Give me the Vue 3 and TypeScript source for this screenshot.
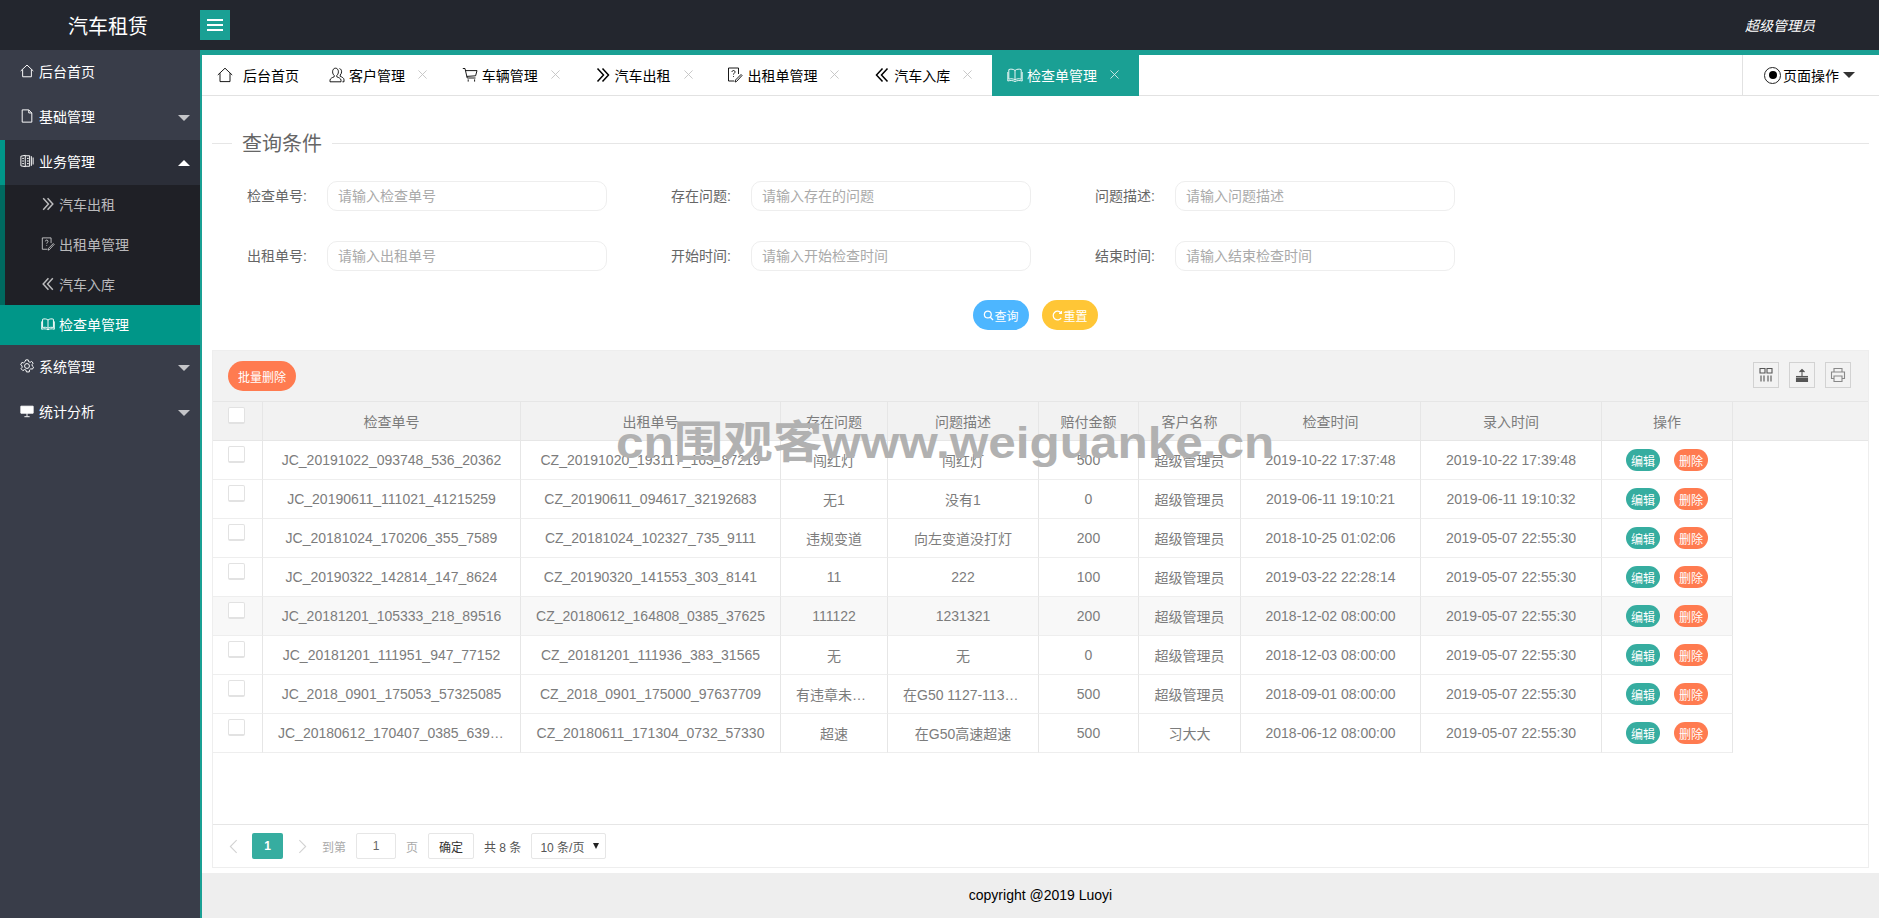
<script setup lang="ts">
import { ref } from 'vue';

interface Tab {
  title: string;
  icon: string;
  closable: boolean;
  active?: boolean;
}

interface NavChild {
  title: string;
  icon: string;
  active?: boolean;
}

interface NavItem {
  title: string;
  icon: string;
  arrow?: 'up' | 'down';
  open?: boolean;
  children?: NavChild[];
}

interface CheckRow {
  checkId: string;
  rentId: string;
  problem: string;
  description: string;
  money: string;
  customer: string;
  checkTime: string;
  createTime: string;
}

// stroke paths, all drawn in a 16x16 box
const icons: Record<string, string[]> = {
  home: ['M.8 8 8 1.2 15.2 8', 'M3 6.2V14.6H13V6.2'],
  file: ['M2.5 1H10L13.5 4.5V15H2.5Z', 'M10 1V4.5H13.5'],
  business: ['M1 2.5 6 1.5V14.5L1 13.5Z', 'M6 2H11V14H6', 'M8 5H10M8 8H10M8 11H10', 'M13 2.5V13.5M15 4V12', 'M2.5 5H4.5M2.5 8H4.5M2.5 11H4.5'],
  gear: ['M6.6 1H9.4L9.8 3 11.6 3.8 13.3 2.7 15 4.8 13.8 6.3 14 8 15.5 9.3 14.2 11.6 12.3 11.2 10.9 12.5 10.6 14.8H7.4L6.9 12.8 5.2 12.1 3.3 13.3 1.2 11.1 2.5 9.4 2.2 7.6.8 6.6 2.1 4 4.2 4.4 5.6 3.2Z', 'M8 5.2A2.8 2.8 0 1 0 8 10.8 2.8 2.8 0 1 0 8 5.2Z'],
  user: ['M6.5 1.2C4.6 1.2 3.6 2.8 3.6 4.8 3.6 6.4 4.3 7.7 5.2 8.4V9.8C3.2 10.6 1 11.5 1 13.2V14.8H12V13.2C12 11.5 9.8 10.6 7.8 9.8V8.4C8.7 7.7 9.4 6.4 9.4 4.8 9.4 2.8 8.4 1.2 6.5 1.2Z', 'M10.5 1.5C12 2 12.6 3.4 12.6 4.8 12.6 6.2 12 7.3 11.2 8V9.3C13 10 15 11 15 12.8V14.8H13.4'],
  cart: ['M.8 1.5H3L5.2 11H13.5', 'M3.6 3.6H15L13.6 8.8 4.8 9.4', 'M6.2 12.4V14.6M12.6 12.4V14.6'],
  right: ['M2.5 1.5 8.5 8 2.5 14.5', 'M7.5 1.5 13.5 8 7.5 14.5'],
  left: ['M8.5 1.5 2.5 8 8.5 14.5', 'M13.5 1.5 7.5 8 13.5 14.5'],
  order: ['M11.5 7V1H1.5V14H7', 'M5 5C5 3 8 3 8 5 8 6.2 6.5 6.2 6.5 7.6', 'M6.5 9.2V10', 'M15 8.5 9.5 14.5 8 15 8.5 13 14 7.5Z'],
  book: ['M8 3.5C6.5 2 3.5 1.8 1.8 2.6V12.2C3.5 11.4 6.5 11.6 8 13 9.5 11.6 12.5 11.4 14.2 12.2V2.6C12.5 1.8 9.5 2 8 3.5Z', 'M8 3.5V13', 'M.8 5V14C3.5 13.2 6 13.4 8 14.6 10 13.4 12.5 13.2 15.2 14V5'],
  board: ['M1 2.5H15V10.5H1Z', 'M8 10.5V14M5 14.5H11'],
  search: ['M7 1.5A5 5 0 1 0 7 11.5 5 5 0 1 0 7 1.5Z', 'M10.6 10.6 14.6 14.6'],
  refresh: ['M13 4.2A6.3 6.3 0 1 0 13.4 11.4', 'M13.6 1.4V4.8H10.2'],
  cols: ['M2 1.5H7V6H2ZM9 1.5H14V6H9Z', 'M3 8.5V14.5M6 8.5V14.5M10 8.5V14.5M13 8.5V14.5'],
  exports: ['M8 9.5V2.5M5.5 5 8 2.5 10.5 5', 'M2 9.5H14', 'M2.5 11H13.5V14.5H2.5Z'],
  print: ['M4 5V1.5H12V5', 'M4 11.5H1.5V5H14.5V11.5H12', 'M4 9H12V14.5H4Z'],
};

const tabs = ref<Tab[]>([
  { title: '后台首页', icon: 'home', closable: false },
  { title: '客户管理', icon: 'user', closable: true },
  { title: '车辆管理', icon: 'cart', closable: true },
  { title: '汽车出租', icon: 'right', closable: true },
  { title: '出租单管理', icon: 'order', closable: true },
  { title: '汽车入库', icon: 'left', closable: true },
  { title: '检查单管理', icon: 'book', closable: true, active: true },
]);

const navItems = ref<NavItem[]>([
  { title: '后台首页', icon: 'home' },
  { title: '基础管理', icon: 'file', arrow: 'down' },
  {
    title: '业务管理',
    icon: 'business',
    arrow: 'up',
    open: true,
    children: [
      { title: '汽车出租', icon: 'right' },
      { title: '出租单管理', icon: 'order' },
      { title: '汽车入库', icon: 'left' },
      { title: '检查单管理', icon: 'book', active: true },
    ],
  },
  { title: '系统管理', icon: 'gear', arrow: 'down' },
  { title: '统计分析', icon: 'board', arrow: 'down' },
]);

const fields = [
  { label: '检查单号:', placeholder: '请输入检查单号' },
  { label: '存在问题:', placeholder: '请输入存在的问题' },
  { label: '问题描述:', placeholder: '请输入问题描述' },
  { label: '出租单号:', placeholder: '请输入出租单号' },
  { label: '开始时间:', placeholder: '请输入开始检查时间' },
  { label: '结束时间:', placeholder: '请输入结束检查时间' },
];

const columns = [
  { title: '检查单号', width: 258 },
  { title: '出租单号', width: 260 },
  { title: '存在问题', width: 107 },
  { title: '问题描述', width: 151 },
  { title: '赔付金额', width: 100 },
  { title: '客户名称', width: 102 },
  { title: '检查时间', width: 180 },
  { title: '录入时间', width: 181 },
  { title: '操作', width: 131 },
];

const rows = ref<CheckRow[]>([
  { checkId: 'JC_20191022_093748_536_20362', rentId: 'CZ_20191020_193117_163_87219', problem: '闯红灯', description: '闯红灯', money: '500', customer: '超级管理员', checkTime: '2019-10-22 17:37:48', createTime: '2019-10-22 17:39:48' },
  { checkId: 'JC_20190611_111021_41215259', rentId: 'CZ_20190611_094617_32192683', problem: '无1', description: '没有1', money: '0', customer: '超级管理员', checkTime: '2019-06-11 19:10:21', createTime: '2019-06-11 19:10:32' },
  { checkId: 'JC_20181024_170206_355_7589', rentId: 'CZ_20181024_102327_735_9111', problem: '违规变道', description: '向左变道没打灯', money: '200', customer: '超级管理员', checkTime: '2018-10-25 01:02:06', createTime: '2019-05-07 22:55:30' },
  { checkId: 'JC_20190322_142814_147_8624', rentId: 'CZ_20190320_141553_303_8141', problem: '11', description: '222', money: '100', customer: '超级管理员', checkTime: '2019-03-22 22:28:14', createTime: '2019-05-07 22:55:30' },
  { checkId: 'JC_20181201_105333_218_89516', rentId: 'CZ_20180612_164808_0385_37625', problem: '111122', description: '1231321', money: '200', customer: '超级管理员', checkTime: '2018-12-02 08:00:00', createTime: '2019-05-07 22:55:30' },
  { checkId: 'JC_20181201_111951_947_77152', rentId: 'CZ_20181201_111936_383_31565', problem: '无', description: '无', money: '0', customer: '超级管理员', checkTime: '2018-12-03 08:00:00', createTime: '2019-05-07 22:55:30' },
  { checkId: 'JC_2018_0901_175053_57325085', rentId: 'CZ_2018_0901_175000_97637709', problem: '有违章未处理', description: '在G50 1127-1138路段', money: '500', customer: '超级管理员', checkTime: '2018-09-01 08:00:00', createTime: '2019-05-07 22:55:30' },
  { checkId: 'JC_20180612_170407_0385_63921', rentId: 'CZ_20180611_171304_0732_57330', problem: '超速', description: '在G50高速超速', money: '500', customer: '习大大', checkTime: '2018-06-12 08:00:00', createTime: '2019-05-07 22:55:30' },
]);

const hoverRow = 4;
</script>

<template>
  <div class="page">
    <header class="top-bar">
      <div class="logo">汽车租赁</div>
      <button class="toggle" type="button">
        <span></span><span></span><span></span>
      </button>
      <div class="user-name">超级管理员</div>
    </header>

    <div class="body-row">
      <aside class="side-nav">
        <div v-for="item in navItems" :key="item.title" :class="{ 'nav-open': item.open }">
          <div class="nav-item">
            <svg class="ico" :class="'i-' + item.icon" viewBox="0 0 16 16"><path v-for="d in icons[item.icon]" :key="d" :d="d" /></svg>
            <span>{{ item.title }}</span>
            <i v-if="item.arrow" class="arrow" :class="item.arrow"></i>
          </div>
          <div v-if="item.children" class="nav-children">
            <div
              v-for="child in item.children"
              :key="child.title"
              class="nav-child"
              :class="{ active: child.active }"
            >
              <svg class="ico" :class="'i-' + child.icon" viewBox="0 0 16 16"><path v-for="d in icons[child.icon]" :key="d" :d="d" /></svg>
              <span>{{ child.title }}</span>
            </div>
          </div>
        </div>
      </aside>

      <main class="main">
        <div class="tab-bar">
          <ul class="tabs">
            <li v-for="tab in tabs" :key="tab.title" class="tab" :class="{ active: tab.active, fixed: !tab.closable }">
              <svg class="ico" :class="'i-' + tab.icon" viewBox="0 0 16 16"><path v-for="d in icons[tab.icon]" :key="d" :d="d" /></svg>
              <span>{{ tab.title }}</span>
              <svg v-if="tab.closable" class="close" viewBox="0 0 16 16"><path d="M3 3 13 13M13 3 3 13" /></svg>
            </li>
          </ul>
          <div class="page-ops">
            <span class="dot-ring"><i></i></span>
            <span>页面操作</span>
            <i class="ops-arrow"></i>
          </div>
        </div>

        <div class="content">
          <div class="field-title"><span>查询条件</span></div>

          <form class="search-form" @submit.prevent>
            <div v-for="f in fields" :key="f.label" class="form-field">
              <label>{{ f.label }}</label>
              <input type="text" :placeholder="f.placeholder" />
            </div>
          </form>

          <div class="search-actions">
            <button class="pill blue" type="button">
              <svg class="ico" viewBox="0 0 16 16"><path v-for="d in icons.search" :key="d" :d="d" /></svg>查询
            </button>
            <button class="pill yellow" type="button">
              <svg class="ico" viewBox="0 0 16 16"><path v-for="d in icons.refresh" :key="d" :d="d" /></svg>重置
            </button>
          </div>

          <section class="data-table">
            <div class="toolbar">
              <button class="pill orange batch" type="button">批量删除</button>
              <div class="tool-icons">
                <span v-for="n in ['cols', 'exports', 'print']" :key="n" class="tool-icon" :class="'tool-' + n">
                  <svg class="ico" viewBox="0 0 16 16"><path v-for="d in icons[n]" :key="d" :d="d" /></svg>
                </span>
              </div>
            </div>

            <div class="table-head">
              <table>
                <colgroup>
                  <col style="width: 50px" />
                  <col v-for="c in columns" :key="c.title" :style="{ width: c.width + 'px' }" />
                </colgroup>
                <thead>
                  <tr>
                    <th class="check-cell"><div class="checkbox"></div></th>
                    <th v-for="c in columns" :key="c.title">{{ c.title }}</th>
                  </tr>
                </thead>
              </table>
            </div>

            <div class="table-body">
              <table>
                <colgroup>
                  <col style="width: 50px" />
                  <col v-for="c in columns" :key="c.title" :style="{ width: c.width + 'px' }" />
                </colgroup>
                <tbody>
                  <tr v-for="(row, i) in rows" :key="row.checkId" :class="{ hover: i === hoverRow }">
                    <td class="check-cell"><div class="checkbox"></div></td>
                    <td>{{ row.checkId }}</td>
                    <td>{{ row.rentId }}</td>
                    <td>{{ row.problem }}</td>
                    <td>{{ row.description }}</td>
                    <td>{{ row.money }}</td>
                    <td>{{ row.customer }}</td>
                    <td>{{ row.checkTime }}</td>
                    <td>{{ row.createTime }}</td>
                    <td class="ops">
                      <button class="mini teal" type="button">编辑</button>
                      <button class="mini orange" type="button">删除</button>
                    </td>
                  </tr>
                </tbody>
              </table>
            </div>

            <div class="pager">
              <svg class="pager-arrow" viewBox="0 0 10 16"><path d="M8.5 1 1.5 8 8.5 15" /></svg>
              <span class="page-num">1</span>
              <svg class="pager-arrow next" viewBox="0 0 10 16"><path d="M1.5 1 8.5 8 1.5 15" /></svg>
              <span class="pager-muted goto">到第</span>
              <input class="page-input" type="text" value="1" />
              <span class="pager-muted">页</span>
              <button class="confirm" type="button">确定</button>
              <span class="total">共 8 条</span>
              <div class="size-select">
                <span>10 条/页</span>
                <i></i>
              </div>
            </div>
          </section>
        </div>

        <footer class="footer">copyright @2019 Luoyi</footer>
      </main>
    </div>

    <div class="watermark">cn围观客www.weiguanke.cn</div>
  </div>
</template>

<style>
html,
body {
  margin: 0;
  padding: 0;
  overflow: hidden;
}
</style>

<style scoped>
.page {
  position: relative;
  display: flex;
  flex-direction: column;
  height: 100vh;
  font-family: "Liberation Sans", "Noto Sans CJK SC", sans-serif;
  font-size: 14px;
  color: #666;
  overflow: hidden;
}

.ico {
  flex: none;
  width: 16px;
  height: 16px;
  fill: none;
  stroke: currentColor;
  stroke-width: 1.1;
}

.i-right,
.i-left {
  stroke-width: 1.7;
}

.i-board {
  fill: currentColor;
}

/* header */
.top-bar {
  display: flex;
  align-items: center;
  flex: none;
  height: 50px;
  background: #23262e;
  color: #fff;
}

.logo {
  width: 200px;
  padding-left: 68px;
  box-sizing: border-box;
  font-size: 20px;
}

.toggle {
  display: flex;
  flex-direction: column;
  justify-content: center;
  gap: 3px;
  width: 30px;
  height: 30px;
  padding: 0 7px;
  border: 0;
  background: #1aa094;
}

.toggle span {
  height: 2px;
  background: #fff;
}

.user-name {
  margin-left: auto;
  margin-right: 64px;
  font-style: italic;
}

/* left menu */
.body-row {
  display: flex;
  flex: 1;
  min-height: 0;
}

.side-nav {
  flex: none;
  width: 200px;
  background: #393d49;
  color: #fff;
}

.nav-item {
  display: flex;
  align-items: center;
  gap: 5px;
  height: 45px;
  box-sizing: border-box;
  padding: 0 0 4px 20px;
}

.nav-item .ico {
  width: 14px;
  height: 14px;
}

.nav-open .nav-item {
  background: #2b2e38;
  box-shadow: inset 5px 0 0 #009688;
}

.arrow {
  width: 0;
  height: 0;
  margin-left: auto;
  margin-right: 10px;
  margin-top: 4px;
  border-left: 6px solid transparent;
  border-right: 6px solid transparent;
}

.arrow.down {
  border-top: 6px solid rgba(255, 255, 255, 0.7);
}

.arrow.up {
  border-bottom: 6px solid #fff;
}

.nav-children {
  background: #1f2026;
  box-shadow: inset 5px 0 0 #00695f;
}

.nav-child {
  display: flex;
  align-items: center;
  gap: 4px;
  height: 40px;
  box-sizing: border-box;
  padding: 0 0 2px 41px;
  color: rgba(255, 255, 255, 0.7);
}

.nav-child .ico {
  width: 14px;
  height: 14px;
}

.nav-child.active {
  background: #009688;
  color: #fff;
}

/* tabs */
.main {
  display: flex;
  flex: 1;
  flex-direction: column;
  min-width: 0;
  border-top: 5px solid #1aa094;
  border-left: 2px solid #1aa094;
}

.tab-bar {
  display: flex;
  flex: none;
  height: 40px;
  border-bottom: 1px solid #e2e2e2;
  color: #000;
}

.tabs {
  display: flex;
  margin: 0;
  padding: 0;
  list-style: none;
}

.tab {
  display: flex;
  align-items: center;
  gap: 4px;
  height: 41px;
  box-sizing: border-box;
  padding: 0 15px 2px;
}

.tab.fixed {
  gap: 10px;
}

.tab .ico {
  stroke-width: 0.9;
}

.tab .i-right,
.tab .i-left {
  stroke-width: 1.5;
}

.tab.active {
  background: #1aa094;
  color: #fff;
}

.close {
  flex: none;
  width: 13px;
  height: 13px;
  margin-left: 7px;
  margin-right: 2.8px;
  fill: none;
  stroke: #c2c2c2;
  stroke-width: 1.1;
}

.tab.active .close {
  stroke: #d5ebe8;
}

.page-ops {
  display: flex;
  align-items: center;
  margin-left: auto;
  width: 137px;
  box-sizing: border-box;
  padding-left: 21px;
  border-left: 1px solid #e2e2e2;
}

.dot-ring {
  display: flex;
  align-items: center;
  justify-content: center;
  width: 15px;
  height: 15px;
  margin-right: 2px;
  border: 1.2px solid #222;
  border-radius: 50%;
}

.dot-ring i {
  width: 8px;
  height: 8px;
  border-radius: 50%;
  background: #000;
}

.ops-arrow {
  width: 0;
  height: 0;
  margin-left: 4px;
  border-left: 6px solid transparent;
  border-right: 6px solid transparent;
  border-top: 6px solid #333;
}

/* search form */
.content {
  flex: 1;
  display: flex;
  flex-direction: column;
  min-height: 0;
  padding: 33px 10px 5px;
  background: #fff;
}

.field-title {
  display: flex;
  align-items: center;
  gap: 10px;
  height: 28px;
  font-size: 20px;
  color: #666;
}

.field-title span {
  margin-bottom: 2px;
}

.field-title::before,
.field-title::after {
  content: "";
  height: 1px;
  background: #e6e6e6;
}

.field-title::before {
  width: 20px;
}

.field-title::after {
  flex: 1;
}

.search-form {
  display: grid;
  grid-template-columns: repeat(3, 395px);
  column-gap: 29px;
  row-gap: 30px;
  margin-top: 24px;
}

.form-field {
  display: flex;
  align-items: center;
}

.form-field label {
  width: 115px;
  padding: 0 20px 2px 0;
  box-sizing: border-box;
  text-align: right;
}

.form-field input {
  width: 280px;
  height: 30px;
  box-sizing: border-box;
  padding: 0 10px;
  border: 1px solid #eee;
  border-radius: 10px;
  outline: 0;
  font: inherit;
  color: #666;
}

.form-field input::placeholder {
  color: #aaa;
}

.search-actions {
  display: flex;
  justify-content: center;
  gap: 13px;
  margin-top: 29px;
  padding-right: 10px;
}

.pill {
  display: flex;
  align-items: center;
  justify-content: center;
  width: 56px;
  height: 30px;
  padding: 0;
  border: 0;
  border-radius: 15px;
  font: inherit;
  font-size: 12px;
  color: #fff;
}

.pill .ico {
  width: 11px;
  height: 11px;
  stroke-width: 1.8;
}

.blue {
  background: #4db6ff;
}

.yellow {
  background: #ffc636;
}

.orange {
  background: #ff7b50;
}

.teal {
  background: #36ada0;
}

/* table */
.data-table {
  display: flex;
  flex: 1;
  flex-direction: column;
  min-height: 0;
  margin-top: 20px;
  border: 1px solid #eee;
}

.toolbar {
  display: flex;
  flex: none;
  align-items: center;
  justify-content: space-between;
  height: 51px;
  padding: 0 17px 0 15px;
  background: #f2f2f2;
  border-bottom: 1px solid #e6e6e6;
  box-sizing: border-box;
}

.pill.batch {
  width: 68px;
}

.tool-icons {
  display: flex;
  gap: 10px;
  margin-bottom: 3px;
}

.tool-icon {
  display: flex;
  align-items: center;
  justify-content: center;
  width: 26px;
  height: 26px;
  box-sizing: border-box;
  border: 1px solid #d2d2d2;
  color: #555;
}

.tool-exports .ico {
  fill: #555;
}

.tool-print {
  color: #888;
}

.table-head {
  flex: none;
  height: 39px;
  background: #f2f2f2;
  border-bottom: 1px solid #e6e6e6;
  box-sizing: border-box;
}

.table-body {
  flex: 1;
  min-height: 0;
}

table {
  width: 1520px;
  table-layout: fixed;
  border-collapse: separate;
  border-spacing: 0;
}

th,
td {
  height: 39px;
  box-sizing: border-box;
  padding: 0 15px;
  border-right: 1px solid #e6e6e6;
  border-bottom: 1px solid #eee;
  font-weight: 400;
  text-align: center;
  white-space: nowrap;
  overflow: hidden;
  text-overflow: ellipsis;
  color: #7c7c7c;
}

th {
  height: 38px;
  border-bottom: 0;
}

td.check-cell,
th.check-cell {
  padding: 5px 0 0 15px;
  vertical-align: top;
  text-overflow: clip;
}

.checkbox {
  width: 17px;
  height: 17px;
  box-sizing: border-box;
  border: 1px solid #e2e2e2;
  border-bottom-width: 2px;
  border-radius: 2px;
  background: #fff;
}

tr.hover td {
  background: #f8f8f8;
}

td.ops {
  padding: 0;
  text-overflow: clip;
}

.mini {
  width: 34px;
  height: 22px;
  padding: 0;
  border: 0;
  border-radius: 11px;
  font: inherit;
  font-size: 12px;
  color: #fff;
  vertical-align: middle;
}

.mini + .mini {
  margin-left: 14px;
}

/* paging */
.pager {
  display: flex;
  flex: none;
  align-items: center;
  height: 43px;
  box-sizing: border-box;
  padding-left: 16px;
  border-top: 1px solid #e6e6e6;
  font-size: 12px;
}

.pager-arrow {
  flex: none;
  width: 9px;
  height: 15px;
  fill: none;
  stroke: #d2d2d2;
  stroke-width: 1.2;
}

.pager-arrow.next {
  margin-left: 15px;
}

.page-num {
  width: 31px;
  height: 26px;
  margin-left: 14px;
  border-radius: 2px;
  background: #36ada0;
  color: #fff;
  font-weight: 700;
  line-height: 26px;
  text-align: center;
}

.pager-muted {
  color: #aaa;
}

.goto {
  margin-left: 15px;
}

.page-input {
  width: 40px;
  height: 26px;
  box-sizing: border-box;
  margin: 0 10px;
  padding: 0;
  border: 1px solid #e6e6e6;
  border-radius: 2px;
  outline: 0;
  font: inherit;
  color: #666;
  text-align: center;
}

.confirm {
  width: 46px;
  height: 26px;
  margin-left: 10px;
  padding: 0;
  border: 1px solid #e6e6e6;
  border-radius: 2px;
  background: #fff;
  font: inherit;
  color: #333;
}

.total {
  margin-left: 10px;
  color: #555;
}

.size-select {
  display: flex;
  align-items: center;
  justify-content: space-between;
  width: 75px;
  height: 26px;
  box-sizing: border-box;
  margin-left: 10px;
  padding: 0 6px 0 8px;
  border: 1px solid #e6e6e6;
  border-radius: 2px;
  color: #555;
}

.size-select i {
  border-left: 3px solid transparent;
  border-right: 3px solid transparent;
  border-top: 6px solid #222;
}

.footer {
  flex: none;
  height: 45px;
  background: #eee;
  color: #000;
  font-size: 14px;
  line-height: 45px;
  text-align: center;
}

/* site stamp laid over the table */
.watermark {
  position: absolute;
  top: 415px;
  left: 616px;
  font-family: "Liberation Sans", "Noto Sans CJK SC", sans-serif;
  font-size: 44px;
  font-weight: 700;
  line-height: 56px;
  color: #b1b1b1;
  white-space: nowrap;
  transform: scaleX(1.125);
  transform-origin: left center;
  pointer-events: none;
}
</style>
